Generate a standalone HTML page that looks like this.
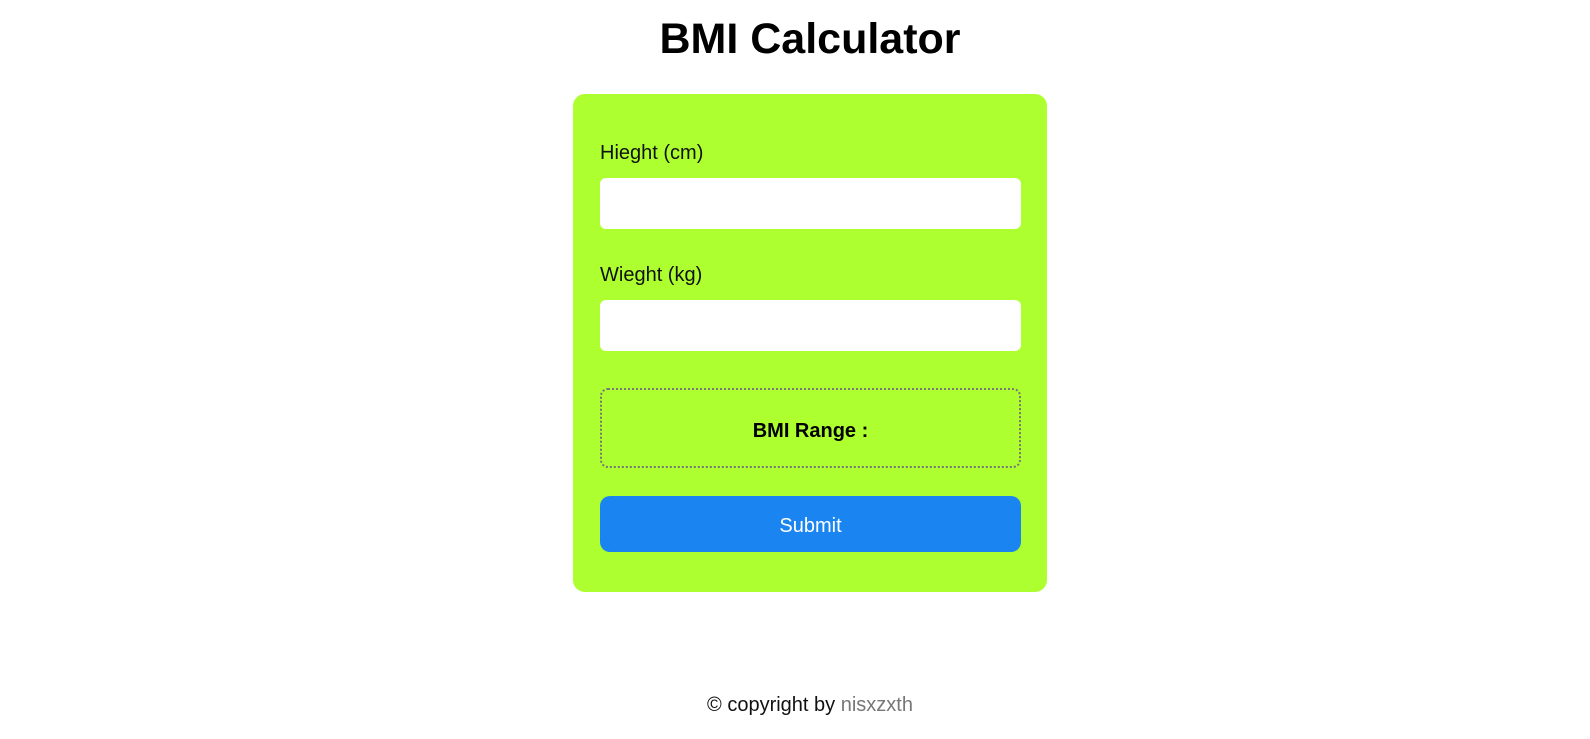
<!DOCTYPE html>
<html><head><style>
body{margin:0;width:1590px;height:739px;background:#fff;font-family:"Liberation Sans",sans-serif;position:relative;overflow:hidden;}
h1{position:absolute;top:15px;left:30px;width:1560px;text-align:center;margin:0;font-size:43px;font-weight:bold;color:#000;}
.card{position:absolute;left:573px;top:94px;width:474px;height:498px;background:#adff2f;border-radius:12px;}
.lbl{position:absolute;left:27px;font-size:20px;color:#111;}
.inp{position:absolute;left:27px;width:421px;height:51px;background:#fff;border-radius:6px;}
.range{position:absolute;left:27px;top:294px;width:417px;height:76px;border:2px dotted #777;border-radius:8px;text-align:center;line-height:82px;font-weight:bold;font-size:20px;}
.btn{position:absolute;left:27px;top:402px;width:421px;height:56px;background:#1a85f0;border-radius:10px;color:#fff;text-align:center;line-height:61px;font-size:20px;}
.foot{position:absolute;top:694px;left:30px;width:1560px;text-align:center;font-size:20px;color:#111;}
.foot span{color:#777}
</style></head><body>
<h1>BMI Calculator</h1>
<div class="card">
<div class="lbl" style="top:48px">Hieght (cm)</div>
<div class="inp" style="top:84px"></div>
<div class="lbl" style="top:170px">Wieght (kg)</div>
<div class="inp" style="top:206px"></div>
<div class="range">BMI Range :</div>
<div class="btn">Submit</div>
</div>
<div class="foot">© copyright by <span>nisxzxth</span></div>
</body></html>
